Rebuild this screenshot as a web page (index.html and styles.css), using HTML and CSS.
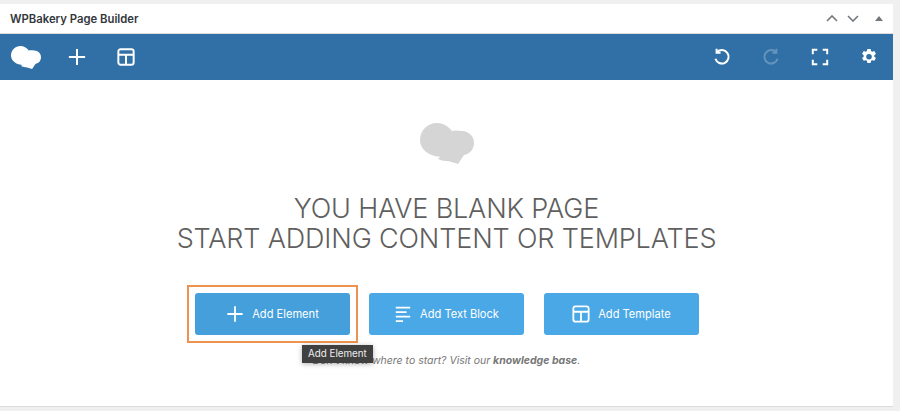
FILE: index.html
```html
<!doctype html>
<html lang="en">
    <head>
        <meta charset="utf-8" />
        <title>WPBakery Page Builder</title>
        <link rel="stylesheet" href="styles.css">
    </head>

    <body>
        <div class="panel">
            <div class="panel-head">
                <h2>WPBakery Page Builder</h2>
                <div class="head-arrows">
                    <svg class="chev" viewBox="0 0 12 7"><path d="M1 6l5-5 5 5"/></svg>
                    <svg class="chev" viewBox="0 0 12 7"><path d="M1 1l5 5 5-5"/></svg>
                    <span class="tri"></span>
                </div>
            </div>

            <div class="toolbar">
                <div class="tools">
                    <svg class="logo" viewBox="0 0 54 41"><path d="M17 0C23 0 28 3 32 8C35 7 38 7.500 42 8C49 8.500 54 13 54 20C54 26 50 31 44 32L38 41C34 40 30 38 26 38C23 38 21 37 18 36L20 33.800C8 33 0 26 0 17C0 7 8 0 17 0Z"/></svg>
                    <svg class="tool plus" viewBox="0 0 20 20"><path d="M10 1v18M1 10h18"/></svg>
                    <svg class="tool" viewBox="0 0 20 20"><rect x="1.500" y="1.500" width="17" height="17" rx="2.500"/><path d="M1.500 7.500h17M10 7.500v11"/></svg>
                </div>
                <div class="tools right">
                    <svg class="tool" viewBox="0 0 20 20"><path d="M4.500 4.500a7.500 7.500 0 1 1-1.800 7.500"/><path d="M4 0.800v4.400h4.400"/></svg>
                    <svg class="tool off" viewBox="0 0 20 20"><path d="M15.500 4.500a7.500 7.500 0 1 0 1.800 7.500"/><path d="M16 0.800v4.400h-4.400"/></svg>
                    <svg class="tool" viewBox="0 0 20 20"><path d="M2 7V2h5M13 2h5v5M18 13v5h-5M7 18H2v-5"/></svg>
                    <svg class="tool gear" viewBox="0 0 20 20"><path d="M8.200 1h3.600l.5 2.400 1.300.7 2.300-.8 1.800 3.100-1.800 1.600v1.600l1.800 1.600-1.800 3.100-2.300-.8-1.300.7-.5 2.400H8.200l-.5-2.400-1.300-.7-2.300.8-1.800-3.100 1.800-1.600V8l-1.800-1.600 1.800-3.100 2.300.8 1.300-.7zM10 6.700a3.100 3.100 0 1 0 0 6.200 3.100 3.100 0 0 0 0-6.200z"/></svg>
                </div>
            </div>

            <div class="blank">
                <svg class="blank-logo" viewBox="0 0 54 41"><path d="M17 0C23 0 28 3 32 8C35 7 38 7.500 42 8C49 8.500 54 13 54 20C54 26 50 31 44 32L38 41C34 40 30 38 26 38C23 38 21 37 18 36L20 33.800C8 33 0 26 0 17C0 7 8 0 17 0Z"/></svg>
                <h1>YOU HAVE BLANK PAGE<br>START ADDING CONTENT OR TEMPLATES</h1>

                <div class="actions">
                    <a class="btn active">
                        <svg viewBox="0 0 20 20"><path d="M10 1.500v17M1.500 10h17"/></svg>
                        Add Element
                        <span class="tooltip">Add Element</span>
                    </a>
                    <a class="btn">
                        <svg viewBox="0 0 20 20"><path d="M2 3h16M2 8h12M2 13h16M2 18h8"/></svg>
                        Add Text Block
                    </a>
                    <a class="btn last">
                        <svg viewBox="0 0 20 20"><rect x="1.500" y="1.500" width="17" height="17" rx="2.500"/><path d="M1.500 7.500h17M10 7.500v11"/></svg>
                        Add Template
                    </a>
                </div>

                <p class="hint">Don't know where to start? Visit our <b>knowledge base</b>.</p>
            </div>
        </div>
    </body>
</html>
```

FILE: styles.css
```css
html, body {
    margin: 0;
    height: 411px;
    overflow: hidden;
    background-color: #f0f0f1;
    font-family: Inter, "Liberation Sans", sans-serif;
}
.panel {
    width: 893px;
    height: 402px;
    margin-top: 4px;
    background-color: #fff;
    border-bottom: 1px solid #dcdcde;
}
.panel-head {
    display: flex;
    align-items: center;
    justify-content: space-between;
    height: 29px;
    padding: 0 10px;
    border-bottom: 1px solid #dcdcde;
}
h2 {
    margin: 0;
    font-size: 11.300px;
    font-weight: 600;
    color: #32373c;
}
.head-arrows {
    display: flex;
    align-items: center;
}
.chev {
    width: 12px;
    height: 7px;
    margin-right: 9px;
    fill: none;
    stroke: #72777c;
    stroke-width: 1.600;
}
.tri {
    margin-left: 7px;
    width: 0;
    height: 0;
    border-left: 4px solid transparent;
    border-right: 4px solid transparent;
    border-bottom: 5px solid #72777c;
}
.toolbar {
    display: flex;
    align-items: center;
    justify-content: space-between;
    height: 46px;
    padding: 0 15px 0 11px;
    background-color: #3070a6;
}
.tools {
    display: flex;
    align-items: center;
    gap: 31px;
}
.logo {
    width: 30px;
    height: 23px;
    margin-right: -4px;
    fill: #fff;
}
.tool {
    width: 18px;
    height: 18px;
    fill: none;
    stroke: #fff;
    stroke-width: 2.200;
}
.tool.off {
    opacity: 0.25;
}
.tool.gear {
    fill: #fff;
    fill-rule: evenodd;
    stroke: none;
}
.blank {
    display: flex;
    flex-direction: column;
    align-items: center;
}
.blank-logo {
    width: 54px;
    height: 41px;
    margin-top: 43px;
    fill: #d5d5d5;
}
h1 {
    margin: 30px 0 0;
    font-size: 27px;
    font-weight: 300;
    line-height: 30px;
    letter-spacing: -0.150px;
    text-align: center;
    color: #5f5f5f;
}
.actions {
    display: flex;
    gap: 19px;
    margin-top: 39px;
    padding-left: 1px;
}
.btn {
    position: relative;
    display: flex;
    align-items: center;
    justify-content: center;
    gap: 8px;
    width: 155px;
    height: 42px;
    border-radius: 3px;
    background-color: #4ba8e6;
    color: #fff;
    font-size: 11.100px;
}
.btn.last {
    margin-left: 1px;
}
.btn svg {
    width: 18px;
    height: 18px;
    fill: none;
    stroke: #fff;
    stroke-width: 2;
}
.btn.active {
    background-color: #459fdb;
}
.btn.active::before {
    content: "";
    position: absolute;
    inset: -8px;
    border: 2.500px solid #ee934f;
}
.tooltip {
    position: absolute;
    left: 107px;
    top: 52px;
    z-index: 2;
    padding: 3px 6px;
    background-color: #404040;
    box-shadow: 0 1px 5px rgba(0, 0, 0, 0.3);
    color: #eee;
    font-size: 9.800px;
    line-height: 12px;
    white-space: nowrap;
}
.hint {
    margin: 19px 0 0;
    font-size: 10.500px;
    font-style: italic;
    color: #777;
}
```
